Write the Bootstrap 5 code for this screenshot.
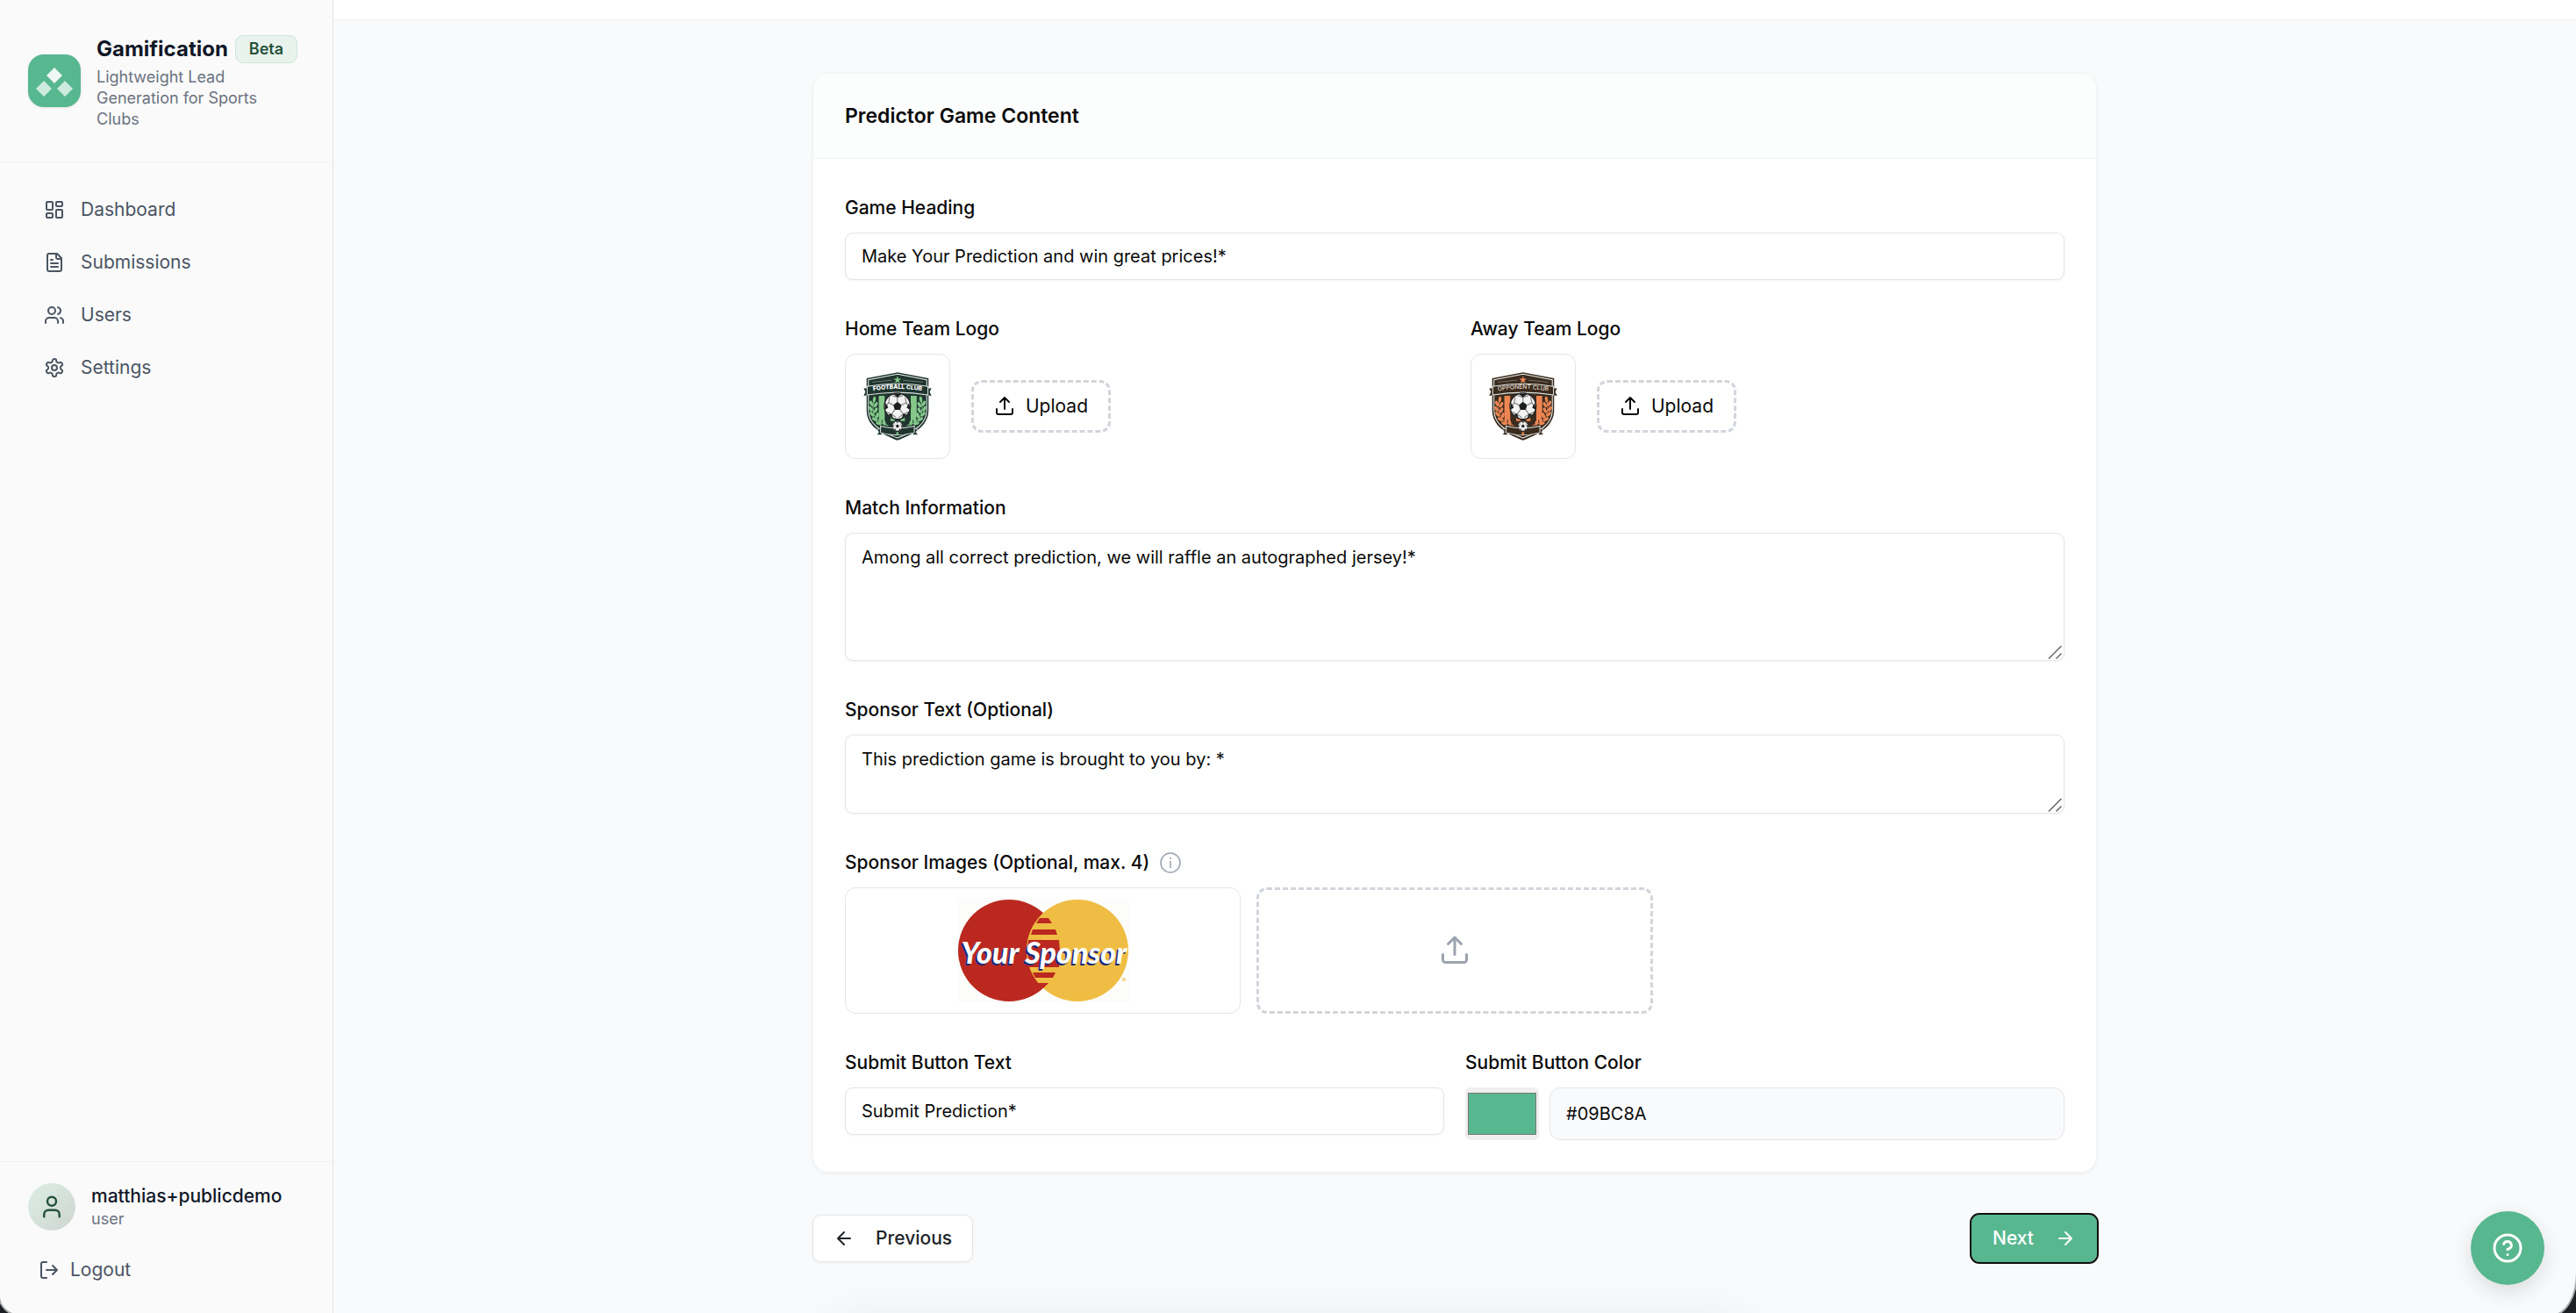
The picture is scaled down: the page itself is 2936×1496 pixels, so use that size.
<!DOCTYPE html>
<html lang="en">
<head>
<meta charset="utf-8">
<meta name="viewport" content="width=device-width, initial-scale=1">
<title>Gamification – Predictor Game</title>
<link href="https://cdn.jsdelivr.net/npm/bootstrap@5.3.0/dist/css/bootstrap.min.css" rel="stylesheet">
<style>
:root{--brand:#57b78f;--ink:#0a0a0a;--line:#e5e5e7}
body{font-family:Inter,"Liberation Sans",sans-serif;font-size:21px;line-height:30px;color:var(--ink);background:#1d2126}
svg{flex:none;display:block}
.ico{fill:none;stroke:currentColor;stroke-width:2;stroke-linecap:round;stroke-linejoin:round}
.shell{background:#f9fafc;border-radius:0 0 28px 24px/0 0 48px 22px;box-shadow:0 0 0 2px #a9abad;overflow:hidden}
.side{width:380px;background:#fafafa;border-right:1px solid #e1e4e8;flex:none}
.side-head{padding:36px 24px 36px 32px;gap:18px;border-bottom:1px solid #f1f2f4}
.brand-tile{width:60px;height:60px;border-radius:18px;background:var(--brand);box-shadow:0 1px 3px #0000001a}
.brand-name{font-size:24px;font-weight:700;line-height:40px;color:#111827}
.beta{font-size:18px;line-height:22px;font-weight:600;color:#25523a;background:#e9f3ee;border:1px solid #cbe8da;border-radius:9px;padding:4px 15px}
.tagline{font-size:18px;line-height:24px;color:#6b7280;margin:0;max-width:210px}
.side-nav{padding:24px 32px}
.side-link{height:60px;padding:0 18px;gap:18px;color:#4b5563;text-decoration:none}
.side-foot{border-top:1px solid #f1f2f4;padding:24px 32px 30px}
.avatar-dot{width:54px;height:54px;border-radius:50%;background:linear-gradient(135deg,#dbeee5,#ced5d1);color:#25523a}
.who{line-height:28px;font-weight:500;color:#111827}
.role{font-size:18px;line-height:24px;color:#6b7280}
.logout{height:42px;padding:0 12px;gap:12px;border:0;background:none;color:#4b5563}
.topbar{height:23px;background:#fff;border-bottom:1px solid #eff1f4}
.page-body{padding:60px 36px}
.wizard{max-width:1464px;margin:0 auto}
.panel{border:1px solid #f1f2f4;border-radius:18px;box-shadow:0 2px 4px #0000000a;overflow:hidden;background:#fff}
.panel-head{background:#fcfefd;border-bottom:1px solid #f0f3f2;padding:28px 36px}
.panel-head h1{font-size:23px;line-height:40px;font-weight:600;margin:0}
.panel-fields{padding:36px;gap:36px}
.caption{display:flex;align-items:center;gap:12px;line-height:40px;margin-bottom:8px;font-weight:500}
.field{font-size:20px;line-height:30px;color:var(--ink);border:1px solid var(--line);border-radius:9px;padding:12px 18px;box-shadow:0 1px 3px #0000000d;background-color:#fff;height:54px}
textarea.field{resize:vertical;background-repeat:no-repeat;background-position:right 2px bottom 1px;background-image:url("data:image/svg+xml,%3Csvg xmlns='http://www.w3.org/2000/svg' width='16' height='16'%3E%3Cpath d='M1 15.500L15.500 1M9.500 15.500L15.500 9.500' stroke='%23666' stroke-width='1.500'/%3E%3C/svg%3E")}
textarea::-webkit-resizer{background:transparent}
.tall{height:146px}.short{height:90px}
.logo-box{width:120px;height:120px;border:1px solid var(--line);border-radius:12px}
.dashed{border:3px dashed #d1d5db;border-radius:12px;background:#fff;color:var(--ink)}
.upload{height:60px;width:159px;gap:12px;font-size:21px}
.tri{display:grid;grid-template-columns:repeat(3,1fr);gap:18px}
.tri>*{height:144px}
.sponsor{border:1px solid var(--line);border-radius:12px;background:#fff}
.muted-ico{color:#9ca3af}
.swatch{width:84px;height:60px;padding:6px 3px;border:0;border-radius:6px;background:#efefef;flex:none}
.swatch::-webkit-color-swatch-wrapper{padding:0}
.swatch::-webkit-color-swatch{border:1px solid #777;border-radius:0}
.hex{height:60px;background:#f9fafb;border-radius:12px;box-shadow:none}
.step-row{margin-top:48px}
.step{height:54px;border-radius:9px;font-size:21px;font-weight:500;padding:0 23px;gap:24px;border:1px solid var(--line);background:#fff;box-shadow:0 1px 3px #0000000d}
.step-next,.step-next:hover{background:var(--brand);color:#fff;border-color:var(--brand);outline:2px solid #101010}
.glow{position:absolute;left:940px;right:940px;bottom:-60px;height:50px;border-radius:60px;box-shadow:0 0 60px #00000014}
.help{position:absolute;right:36px;bottom:34px;width:84px;height:84px;border:0;border-radius:50%;background:var(--brand);color:#fff;box-shadow:0 8px 24px #0000001f}
.crest-green{--dark:#20362f;--hue:#84c98a}
.crest-orange{--dark:#3a2b1e;--hue:#ee8654}
</style>
<script src="https://cdn.jsdelivr.net/npm/bootstrap@5.3.0/dist/js/bootstrap.bundle.min.js"></script>
</head>
<body>
<svg width="0" height="0" class="position-absolute" aria-hidden="true">
  <defs>
    <path id="arc" d="M22 65Q115 48 209 65"/>
    <g id="leaf"><ellipse rx="5" ry="10"/></g>
    <g id="laurel" fill="var(--hue)">
      <path d="M36 96C24 140 44 172 84 180" fill="none" stroke="var(--hue)" stroke-width="3"/>
      <use href="#leaf" transform="translate(37 92) rotate(8)"/>
      <use href="#leaf" transform="translate(27 106) rotate(-25)"/><use href="#leaf" transform="translate(42 110) rotate(30)"/>
      <use href="#leaf" transform="translate(25 124) rotate(-30)"/><use href="#leaf" transform="translate(42 129) rotate(25)"/>
      <use href="#leaf" transform="translate(29 142) rotate(-42)"/><use href="#leaf" transform="translate(47 146) rotate(12)"/>
      <use href="#leaf" transform="translate(38 159) rotate(-55)"/><use href="#leaf" transform="translate(57 160) rotate(-5)"/>
      <use href="#leaf" transform="translate(52 173) rotate(-70)"/><use href="#leaf" transform="translate(70 170) rotate(-20)"/>
    </g>
    <g id="ball">
      <circle r="44" fill="#f3f3f3" stroke="#222" stroke-width="4"/>
      <path d="M0-15 14-4 9 12-9 12-14-4Z" fill="#1b1f1e"/>
      <path d="M0-15V-30M14-4 30-12M9 12 20 27M-9 12-20 27M-14-4-30-12M0-30 18-36M0-30-18-36M30-12 40 6M30-12 26-30M-30-12-40 6M-30-12-26-30M20 27 4 38M20 27 36 20M-20 27-4 38M-20 27-36 20" fill="none" stroke="#777" stroke-width="3"/>
      <path d="M-14-41 14-41 0-30ZM40-12 43 12 31 5ZM-40-12-43 12-31 5ZM14 41 31 29 20 25ZM-14 41-31 29-20 25Z" fill="#1b1f1e"/>
    </g>
    <g id="crest">
      <path d="M115 1 220 21V128C220 178 178 206 115 230 52 206 11 178 11 128V21Z" fill="var(--dark)"/>
      <path d="M115 7 214 26V128C214 173 175 200 115 222 56 200 17 173 17 128V26Z" fill="none" stroke="#e6ece8" stroke-width="3"/>
      <path d="M52 80H72V168L52 150ZM160 80H180V150L160 168ZM92 80H106V165H92ZM126 80H140V165H126Z" fill="var(--hue)"/>
      <path d="M30 34 96 27M200 34 134 27" stroke="#87918c" stroke-width="2"/>
      <path d="M115 12 118 22 128 22 120 28 123 38 115 32 107 38 110 28 102 22 112 22Z" fill="var(--hue)"/>
      <path d="M1 54 22 56V76L1 80 7 67ZM230 54 209 56V76L230 80 224 67Z" fill="var(--dark)"/>
      <path d="M13 48Q115 30 218 48V77Q115 60 13 77Z" fill="var(--dark)" stroke="#dfe6e2" stroke-width="3"/>
      <use href="#laurel"/><use href="#laurel" transform="matrix(-1 0 0 1 231 0)"/>
      <use href="#ball" transform="translate(115 115)"/>
      <path d="M46 193 62 190V212L46 211 52 202ZM184 193 168 190V212L184 211 178 202Z" fill="var(--dark)" stroke="#dfe6e2" stroke-width="2"/>
      <path d="M58 182Q115 196 172 182V204Q115 220 58 204Z" fill="var(--dark)" stroke="#dfe6e2" stroke-width="3"/>
      <use href="#ball" transform="translate(115 182) scale(.38)"/>
      <path d="M110 203H120L115 216Z" fill="var(--hue)"/>
    </g>
    <g id="up"><path d="M21 15v4a2 2 0 0 1-2 2H5a2 2 0 0 1-2-2v-4M17 7l-5-5-5 5M12 2v13"/></g>
  </defs>
</svg>

<div class="shell d-flex min-vh-100 position-relative">
  <aside class="side d-flex flex-column">
    <div class="side-head d-flex align-items-center">
      <div class="brand-tile d-flex align-items-center justify-content-center flex-shrink-0">
        <svg width="60" height="60" viewBox="0 0 60 60" fill="#fff"><path d="M30 15 39 24 30 33 21 24Z" opacity=".9"/><path d="M18 30 27 39 18 48 9 39ZM42 30 51 39 42 48 33 39Z" opacity=".7"/></svg>
      </div>
      <div>
        <div class="d-flex align-items-center gap-2"><span class="brand-name">Gamification</span><span class="beta">Beta</span></div>
        <p class="tagline">Lightweight Lead Generation for Sports Clubs</p>
      </div>
    </div>
    <nav class="side-nav d-flex flex-column flex-grow-1">
      <a class="side-link d-flex align-items-center" href="#"><svg class="ico" width="24" height="24" viewBox="0 0 24 24"><rect x="3" y="3" width="7" height="9" rx="1"/><rect x="14" y="3" width="7" height="5" rx="1"/><rect x="14" y="12" width="7" height="9" rx="1"/><rect x="3" y="16" width="7" height="5" rx="1"/></svg>Dashboard</a>
      <a class="side-link d-flex align-items-center" href="#"><svg class="ico" width="24" height="24" viewBox="0 0 24 24"><path d="M15 2H6a2 2 0 0 0-2 2v16a2 2 0 0 0 2 2h12a2 2 0 0 0 2-2V7ZM14 2v4a2 2 0 0 0 2 2h4M10 9H8M16 13H8M16 17H8"/></svg>Submissions</a>
      <a class="side-link d-flex align-items-center" href="#"><svg class="ico" width="24" height="24" viewBox="0 0 24 24"><path d="M16 21v-2a4 4 0 0 0-4-4H6a4 4 0 0 0-4 4v2M22 21v-2a4 4 0 0 0-3-3.870M16 3.130a4 4 0 0 1 0 7.750"/><circle cx="9" cy="7" r="4"/></svg>Users</a>
      <a class="side-link d-flex align-items-center" href="#"><svg class="ico" width="24" height="24" viewBox="0 0 24 24"><path d="M12.220 2h-.44a2 2 0 0 0-2 2v.18a2 2 0 0 1-1 1.730l-.43.25a2 2 0 0 1-2 0l-.15-.08a2 2 0 0 0-2.730.73l-.22.38a2 2 0 0 0 .73 2.730l.15.1a2 2 0 0 1 1 1.720v.51a2 2 0 0 1-1 1.740l-.15.09a2 2 0 0 0-.73 2.730l.22.38a2 2 0 0 0 2.730.73l.15-.08a2 2 0 0 1 2 0l.43.25a2 2 0 0 1 1 1.730V20a2 2 0 0 0 2 2h.44a2 2 0 0 0 2-2v-.18a2 2 0 0 1 1-1.730l.43-.25a2 2 0 0 1 2 0l.15.08a2 2 0 0 0 2.730-.73l.22-.39a2 2 0 0 0-.73-2.730l-.15-.08a2 2 0 0 1-1-1.740v-.5a2 2 0 0 1 1-1.740l.15-.09a2 2 0 0 0 .73-2.730l-.22-.38a2 2 0 0 0-2.730-.73l-.15.08a2 2 0 0 1-2 0l-.43-.25a2 2 0 0 1-1-1.730V4a2 2 0 0 0-2-2z"/><circle cx="12" cy="12" r="3"/></svg>Settings</a>
    </nav>
    <div class="side-foot">
      <div class="d-flex align-items-center mb-4" style="gap:18px">
        <div class="avatar-dot d-flex align-items-center justify-content-center"><svg class="ico" width="30" height="30" viewBox="0 0 24 24"><path d="M19 21v-2a4 4 0 0 0-4-4H9a4 4 0 0 0-4 4v2"/><circle cx="12" cy="7" r="4"/></svg></div>
        <div><div class="who">matthias+publicdemo</div><div class="role">user</div></div>
      </div>
      <button type="button" class="logout d-flex align-items-center"><svg class="ico" width="24" height="24" viewBox="0 0 24 24"><path d="M9 21H5a2 2 0 0 1-2-2V5a2 2 0 0 1 2-2h4M16 17l5-5-5-5M21 12H9"/></svg>Logout</button>
    </div>
  </aside>

  <main class="flex-grow-1">
    <div class="topbar"></div>
    <div class="page-body">
      <form class="wizard">
        <section class="panel">
          <header class="panel-head"><h1>Predictor Game Content</h1></header>
          <div class="panel-fields d-flex flex-column">
            <div>
              <label class="caption" for="heading">Game Heading</label>
              <input id="heading" class="form-control field" type="text" value="Make Your Prediction and win great prices!*">
            </div>
            <div class="d-flex" style="gap:36px">
              <div class="flex-fill w-50">
                <div class="caption">Home Team Logo</div>
                <div class="d-flex align-items-center gap-4">
                  <div class="logo-box d-flex align-items-center justify-content-center">
                    <svg class="crest-green" width="78" height="78" viewBox="0 0 231 231" role="img" aria-label="Football Club crest"><use href="#crest"/><text font-family="Inter,sans-serif" font-size="20" font-weight="800" fill="#fff" text-anchor="middle"><textPath href="#arc" startOffset="50%">FOOTBALL CLUB</textPath></text></svg>
                  </div>
                  <button type="button" class="btn dashed upload d-flex align-items-center justify-content-center p-0"><svg class="ico" width="24" height="24" viewBox="0 0 24 24"><use href="#up"/></svg>Upload</button>
                </div>
              </div>
              <div class="flex-fill w-50">
                <div class="caption">Away Team Logo</div>
                <div class="d-flex align-items-center gap-4">
                  <div class="logo-box d-flex align-items-center justify-content-center">
                    <svg class="crest-orange" width="78" height="78" viewBox="0 0 231 231" role="img" aria-label="Opponent Club crest"><use href="#crest"/><text font-family="Inter,sans-serif" font-size="20" font-weight="500" fill="#e8dfd3" text-anchor="middle"><textPath href="#arc" startOffset="50%">OPPONENT CLUB</textPath></text></svg>
                  </div>
                  <button type="button" class="btn dashed upload d-flex align-items-center justify-content-center p-0"><svg class="ico" width="24" height="24" viewBox="0 0 24 24"><use href="#up"/></svg>Upload</button>
                </div>
              </div>
            </div>
            <div>
              <label class="caption" for="match">Match Information</label>
              <textarea id="match" class="form-control field tall">Among all correct prediction, we will raffle an autographed jersey!*</textarea>
            </div>
            <div>
              <label class="caption" for="sponsortext">Sponsor Text (Optional)</label>
              <textarea id="sponsortext" class="form-control field short">This prediction game is brought to you by: *</textarea>
            </div>
            <div>
              <div class="caption">Sponsor Images (Optional, max. 4)
                <svg class="muted-ico" width="24" height="24" viewBox="0 0 24 24" fill="none" stroke="currentColor" stroke-width="1.500"><circle cx="12" cy="12" r="11"/><path d="M12 10v8M12 6v2"/></svg>
              </div>
              <div class="tri">
                <div class="sponsor d-flex align-items-center justify-content-center">
                  <svg width="196" height="118" viewBox="0 0 196 118" role="img" aria-label="Your Sponsor logo">
                    <rect width="196" height="118" fill="#fcfcfa"/>
                    <circle cx="59" cy="59" r="58" fill="#bb281f"/>
                    <circle cx="137" cy="59" r="58" fill="#efbd43"/>
                    <path d="M94 22H104L108 28H90ZM86 35H112L114 41H84ZM81 47H116L117 59 116 78H82L80 59ZM86 84H112L109 90H89ZM91 96H104L98 102Z" fill="#bb281f"/>
                    <g font-family="Lato,'Open Sans',sans-serif" font-size="34" font-weight="900" font-style="italic" text-anchor="middle"><text x="97" y="76" fill="#1d2a78">Your Sponsor</text><text x="99" y="74" fill="#fff">Your Sponsor</text></g>
                    <circle cx="190" cy="92" r="1.500" fill="none" stroke="#efbd43"/>
                  </svg>
                </div>
                <button type="button" class="dashed d-flex align-items-center justify-content-center muted-ico" aria-label="Upload sponsor image"><svg class="ico" width="36" height="36" viewBox="0 0 24 24"><use href="#up"/></svg></button>
              </div>
            </div>
            <div class="d-flex gap-4">
              <div class="flex-fill w-50">
                <label class="caption" for="submittext">Submit Button Text</label>
                <input id="submittext" class="form-control field" type="text" value="Submit Prediction*">
              </div>
              <div class="flex-fill w-50">
                <label class="caption" for="hex">Submit Button Color</label>
                <div class="d-flex" style="gap:12px">
                  <input class="swatch" type="color" value="#57b78f" aria-label="Pick button color">
                  <input id="hex" class="form-control field hex" type="text" value="#09BC8A">
                </div>
              </div>
            </div>
          </div>
        </section>
        <div class="step-row d-flex justify-content-between">
          <button type="button" class="btn step d-flex align-items-center"><svg class="ico" width="24" height="24" viewBox="0 0 24 24"><path d="m12 19-7-7 7-7M19 12H5"/></svg>Previous</button>
          <button type="button" class="btn step step-next d-flex align-items-center">Next<svg class="ico" width="24" height="24" viewBox="0 0 24 24"><path d="M5 12h14M12 5l7 7-7 7"/></svg></button>
        </div>
      </form>
    </div>
  </main>
  <div class="glow"></div>
  <button type="button" class="help d-flex align-items-center justify-content-center" aria-label="Help"><svg class="ico" width="36" height="36" viewBox="0 0 24 24"><circle cx="12" cy="12" r="10"/><path d="M9.090 9a3 3 0 0 1 5.830 1c0 2-3 3-3 3M12 17h.01"/></svg></button>
</div>
</body>
</html>
